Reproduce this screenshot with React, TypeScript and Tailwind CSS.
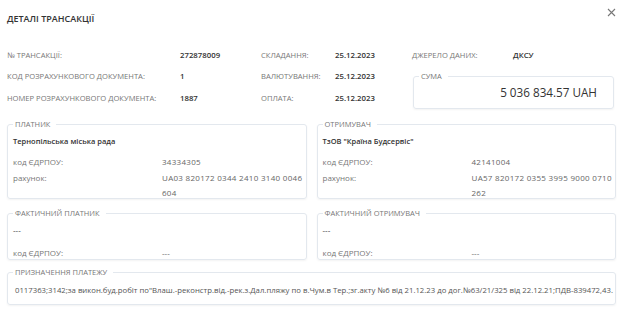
import React from "react";

function Box({ title, children, className = "" }: { title: string; children: React.ReactNode; className?: string }) {
  return (
    <fieldset className={`border border-[#e3e8ee] rounded-[3px] shadow-[0_1px_2px_rgba(0,0,0,0.05)] px-[5px] m-0 min-w-0 ${className}`}>
      <legend className="pl-[2px] pr-[6px] text-[7.5px] leading-[10px] text-[#777]">{title}</legend>
      {children}
    </fieldset>
  );
}

function Party({ title, name, code, account1, account2 }: { title: string; name: string; code: string; account1: string; account2: string }) {
  return (
    <Box title={title} className="flex-1 h-[80px]">
      <div className="text-[7.5px] font-semibold text-[#333] leading-[11px] mt-[6.5px]">{name}</div>
      <div className="flex text-[8px] text-[#777] leading-[11px] mt-[9px]">
        <div className="w-[149px] shrink-0">код ЄДРПОУ:</div>
        <div className="text-[#666] tracking-[0.3px] whitespace-nowrap">{code}</div>
      </div>
      <div className="flex text-[8px] text-[#777] leading-[15px] mt-[3px]">
        <div className="w-[149px] shrink-0">рахунок:</div>
        <div className="text-[#666] tracking-[0.3px] whitespace-nowrap">{account1}<br />{account2}</div>
      </div>
    </Box>
  );
}

function Actual({ title }: { title: string }) {
  return (
    <Box title={title} className="flex-1 h-[52px]">
      <div className="text-[8px] text-[#333] leading-[11px] mt-[5.5px]">---</div>
      <div className="flex text-[8px] text-[#777] leading-[11px] mt-[12px]">
        <div className="w-[149px]">код ЄДРПОУ:</div>
        <div className="text-[#666]">---</div>
      </div>
    </Box>
  );
}

export default function App() {
  return (
    <div className="w-[623px] h-[311px] bg-white relative overflow-hidden" style={{ fontFamily: '"Open Sans", "Noto Sans", sans-serif' }}>
      <button className="absolute left-[606px] top-[7px] w-[11px] h-[11px] flex items-center justify-center">
        <svg width="9" height="9" viewBox="0 0 9 9" fill="none" stroke="#777" strokeWidth="1.1">
          <path d="M1 1L8 8M8 1L1 8" />
        </svg>
      </button>
      <div className="px-[7px]">
        <div className="pt-[12px] text-[9px] font-semibold text-[#333] leading-[14px]">ДЕТАЛІ ТРАНСАКЦІЇ</div>
        <div className="flex mt-[23.5px] leading-[11px]">
          <div className="w-[173px] flex flex-col gap-[10.5px] text-[7.6px] text-[#777]">
            <div className="h-[11px]">№ ТРАНСАКЦІЇ:</div>
            <div className="h-[11px]">КОД РОЗРАХУНКОВОГО ДОКУМЕНТА:</div>
            <div className="h-[11px]">НОМЕР РОЗРАХУНКОВОГО ДОКУМЕНТА:</div>
          </div>
          <div className="w-[81px] flex flex-col gap-[10.5px] text-[7.8px] font-semibold text-[#333]">
            <div className="h-[11px]">272878009</div>
            <div className="h-[11px]">1</div>
            <div className="h-[11px]">1887</div>
          </div>
          <div className="w-[74px] flex flex-col gap-[10.5px] text-[7.6px] text-[#777]">
            <div className="h-[11px]">СКЛАДАННЯ:</div>
            <div className="h-[11px]">ВАЛЮТУВАННЯ:</div>
            <div className="h-[11px]">ОПЛАТА:</div>
          </div>
          <div className="w-[77px] flex flex-col gap-[10.5px] text-[7.8px] font-semibold text-[#333]">
            <div className="h-[11px]">25.12.2023</div>
            <div className="h-[11px]">25.12.2023</div>
            <div className="h-[11px]">25.12.2023</div>
          </div>
          <div className="w-[202px] flex flex-col">
            <div className="flex h-[11px]">
              <div className="w-[101px] text-[7.6px] text-[#777]">ДЖЕРЕЛО ДАНИХ:</div>
              <div className="text-[7.8px] font-semibold text-[#333]">ДКСУ</div>
            </div>
            <Box title="СУМА" className="mt-[10.5px] ml-[1px] h-[38px]">
              <div className="text-right text-[11.7px] leading-[18px] text-[#333] pr-[11px] mt-[2px]">5 036 834.57 UAH</div>
            </Box>
          </div>
        </div>
        <div className="flex gap-[10px] mt-[10px]">
          <Party title="ПЛАТНИК" name="Тернопільська міська рада" code="34334305" account1="UA03 820172 0344 2410 3140 0046" account2="604" />
          <Party title="ОТРИМУВАЧ" name={'ТзОВ "Країна Будсервіс"'} code="42141004" account1="UA57 820172 0355 3995 9000 0710" account2="262" />
        </div>
        <div className="flex gap-[10px] mt-[9px]">
          <Actual title="ФАКТИЧНИЙ ПЛАТНИК" />
          <Actual title="ФАКТИЧНИЙ ОТРИМУВАЧ" />
        </div>
        <Box title="ПРИЗНАЧЕННЯ ПЛАТЕЖУ" className="mt-[7px] h-[38px]">
          <div className="text-[7.75px] text-[#555] leading-[11px] pl-[2px] mt-[7.5px] whitespace-nowrap">
            0117363;3142;за викон.буд.робіт по"Влаш.-реконстр.від.-рек.з.Дал.пляжу по в.Чум.в Тер.;зг.акту №6 від 21.12.23 до дог.№63/21/325 від 22.12.21;ПДВ-839472,43.
          </div>
        </Box>
      </div>
    </div>
  );
}
